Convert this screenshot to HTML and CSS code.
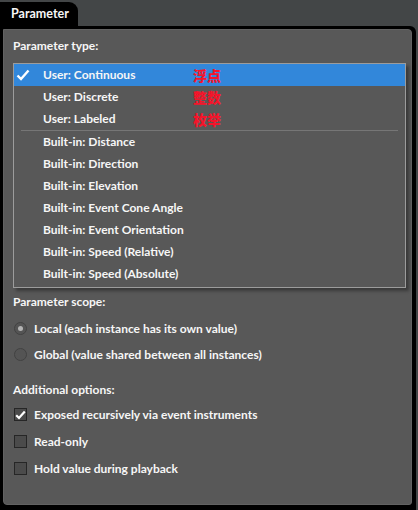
FILE: index.html
```html
<!DOCTYPE html>
<html>
<head>
<meta charset="utf-8">
<link rel="stylesheet" href="styles.css">
</head>
<body>
<div class="tab">Parameter</div>
<div class="frame">
  <div class="panel">
    <div class="label label-type">Parameter type:</div>
    <div class="list">
      <div class="row selected">
        <svg class="tick" width="14" height="12" viewBox="0 0 14 12"><path d="M1.5 6.5 L5 10 L12.5 1.5" fill="none" stroke="#ffffff" stroke-width="2.4"/></svg>
        <span class="name">User: Continuous</span><span class="cn">浮点</span>
      </div>
      <div class="row"><span class="name">User: Discrete</span><span class="cn">整数</span></div>
      <div class="row"><span class="name">User: Labeled</span><span class="cn">枚举</span></div>
      <div class="sep"></div>
      <div class="row"><span class="name">Built-in: Distance</span></div>
      <div class="row"><span class="name">Built-in: Direction</span></div>
      <div class="row"><span class="name">Built-in: Elevation</span></div>
      <div class="row"><span class="name">Built-in: Event Cone Angle</span></div>
      <div class="row"><span class="name">Built-in: Event Orientation</span></div>
      <div class="row"><span class="name">Built-in: Speed (Relative)</span></div>
      <div class="row"><span class="name">Built-in: Speed (Absolute)</span></div>
    </div>
    <div class="label label-scope">Parameter scope:</div>
    <div class="opt radio-row"><span class="radio on"></span><span>Local (each instance has its own value)</span></div>
    <div class="opt radio-row"><span class="radio"></span><span>Global (value shared between all instances)</span></div>
    <div class="label label-add">Additional options:</div>
    <div class="opt check-row"><span class="box"><svg width="11" height="10" viewBox="0 0 11 10"><path d="M1.2 5.2 L4 8 L9.8 1.5" fill="none" stroke="#ffffff" stroke-width="2.2"/></svg></span><span>Exposed recursively via event instruments</span></div>
    <div class="opt check-row"><span class="box"></span><span>Read-only</span></div>
    <div class="opt check-row"><span class="box"></span><span>Hold value during playback</span></div>
  </div>
</div>
</body>
</html>
```
FILE: styles.css
```css
html, body {
  margin: 0;
  padding: 0;
}
body {
  background: #434647;
  width: 418px;
  height: 510px;
  overflow: hidden;
  font-family: Lato, "Liberation Sans", sans-serif;
  font-weight: 700;
  font-size: 12px;
  color: #f6f6f6;
}
.tab {
  margin-top: 2px;
  width: 67px;
  height: 24px;
  padding-left: 11px;
  background: #000;
  border-radius: 0 9px 0 0;
  line-height: 23px;
  font-size: 12.5px;
}
.frame {
  width: 416px;
  height: 484px;
  box-sizing: border-box;
  background: #000;
  border-radius: 0 6px 0 0;
  padding: 3px 4px 5px 3px;
}
.panel {
  height: 100%;
  box-sizing: border-box;
  background: #585858;
  border: 1px solid #626262;
  border-radius: 0 4px 3px 4px;
  padding: 8px 10px 0 9px;
}
.label {
  height: 16px;
  line-height: 16px;
}
.list {
  margin-top: 9px;
  border: 1px solid #9c9c9c;
  padding-bottom: 2px;
  box-shadow: 3px 3px 3px rgba(0,0,0,0.35);
  width: 391px;
}
.row {
  height: 22px;
  line-height: 22px;
  display: flex;
  align-items: center;
  padding-left: 29px;
  position: relative;
}
.row.selected {
  background: #3287da;
}
.tick {
  position: absolute;
  left: 2px;
  top: 5px;
}
.name {
  width: 150px;
}
.cn {
  font-family: "Noto Sans CJK SC", sans-serif;
  font-weight: 900;
  font-size: 14px;
  color: #f5142a;
  line-height: 22px;
}
.sep {
  height: 1px;
  background: #767676;
  margin: 0 7px;
}
.label-scope {
  margin-top: 6px;
}
.opt {
  display: flex;
  align-items: center;
  gap: 7px;
}
.radio-row {
  height: 26px;
}
.label-scope + .radio-row {
  margin-top: 5px;
}
.radio {
  width: 11px;
  height: 11px;
  border-radius: 50%;
  border: 1px solid #424242;
  background: #545454;
  display: flex;
  align-items: center;
  justify-content: center;
  margin-left: 1px;
}
.radio.on::after {
  content: "";
  width: 5px;
  height: 5px;
  border-radius: 50%;
  background: #b4b4b4;
}
.label-add {
  margin-top: 15px;
}
.check-row {
  height: 27px;
}
.label-add + .check-row {
  margin-top: 3px;
}
.box {
  width: 11px;
  height: 11px;
  border: 1px solid #262626;
  background: #4b4b4b;
  display: flex;
  align-items: center;
  justify-content: center;
  margin-left: 1px;
}
```
